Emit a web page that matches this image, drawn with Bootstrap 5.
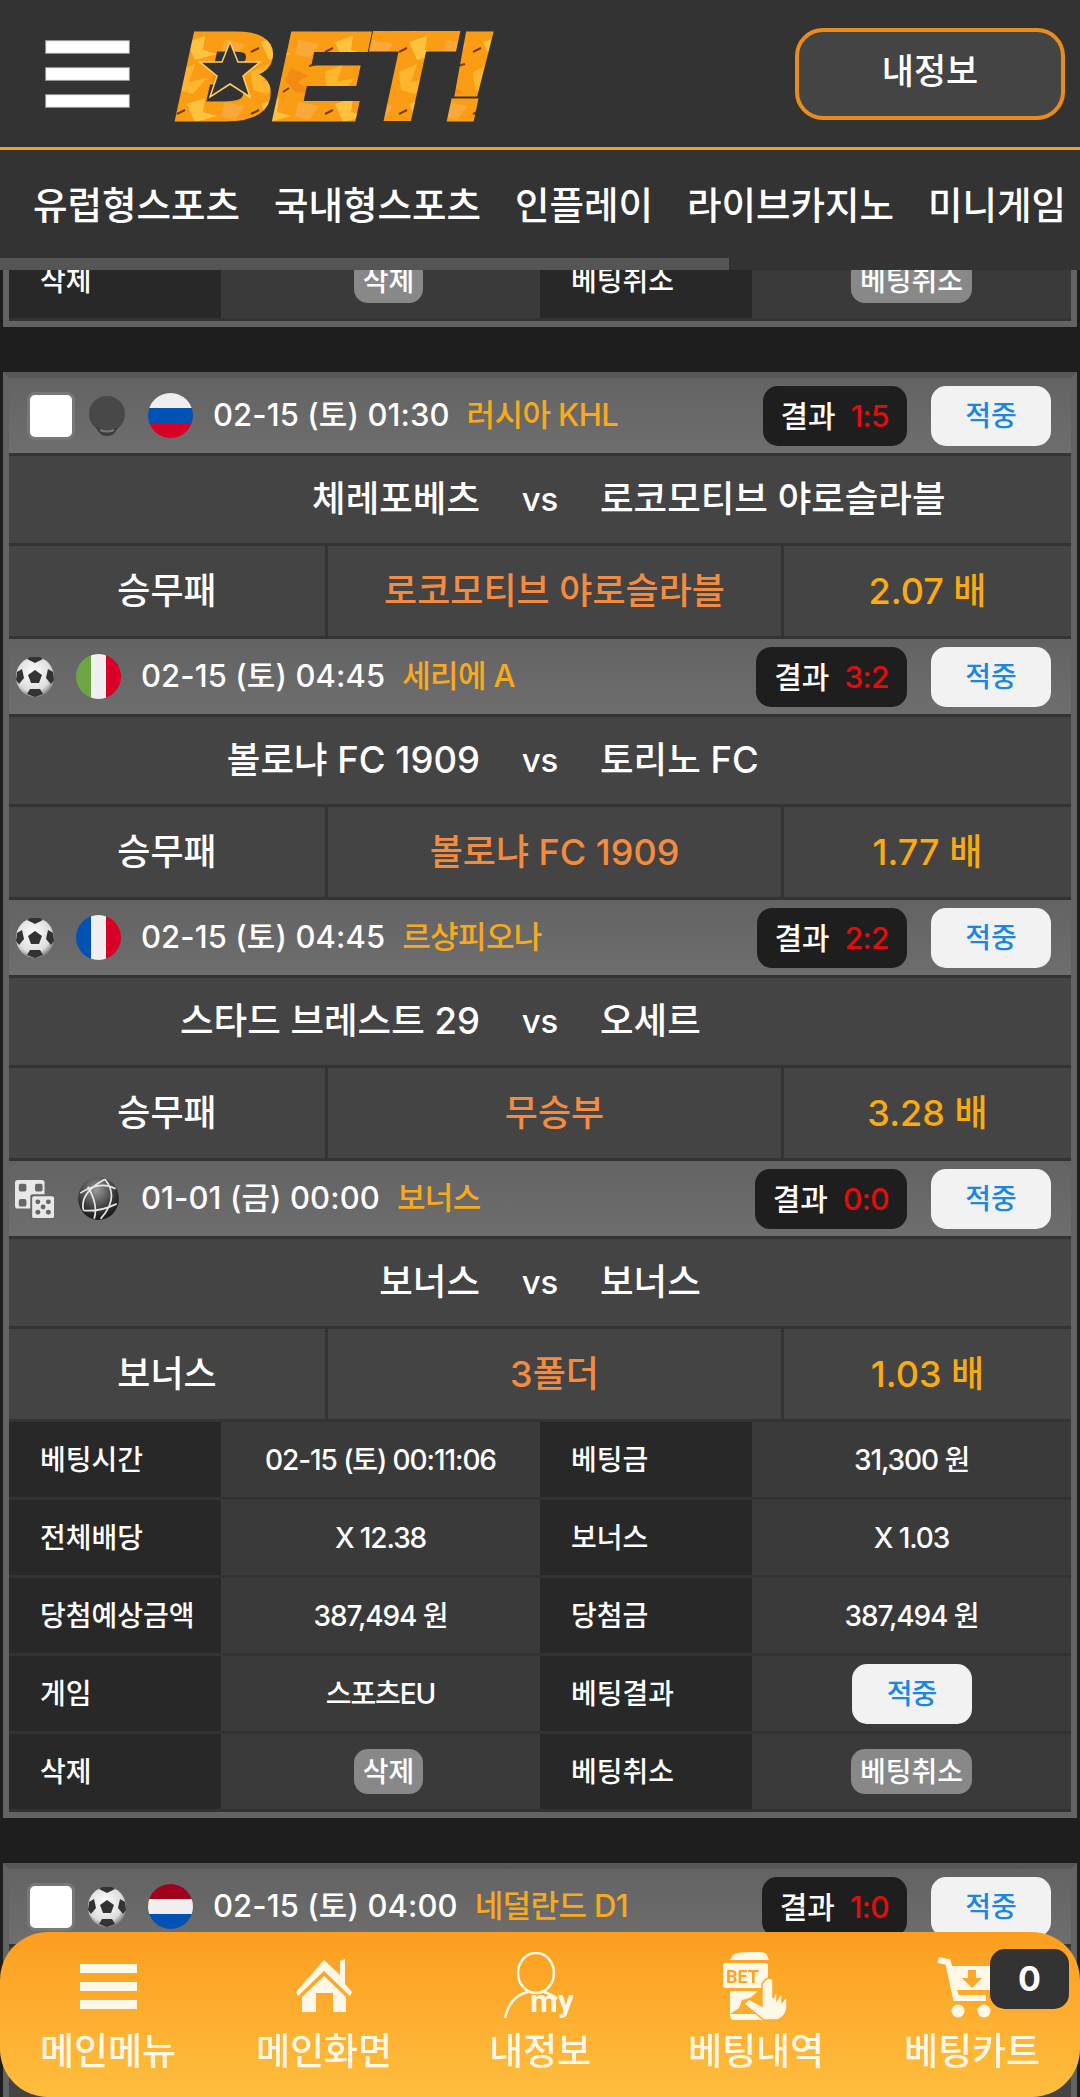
<!DOCTYPE html>
<html lang="ko">
<head>
<meta charset="utf-8">
<title>BET!</title>
<link href="https://cdn.jsdelivr.net/npm/bootstrap@5.3.3/dist/css/bootstrap.min.css" rel="stylesheet">
<script src="https://cdn.jsdelivr.net/npm/bootstrap@5.3.3/dist/js/bootstrap.bundle.min.js"></script>
<style>
    html, body { height: 2097px; overflow: hidden; }
    body {
        background: #1e1e1e;
        color: #fff;
        font-family: Inter, "Noto Sans CJK KR", sans-serif;
        font-weight: 500;
    }
    .svg-defs { width: 0; height: 0; overflow: hidden; }

    .top-head { background: #333; }
    .head-bar { height: 147px; padding: 0 15px 0 45px; }
    .burger { width: 85px; gap: 13px; }
    .burger span { height: 14px; background: #fff; box-shadow: 0 0 1px 1px #888 inset; }
    .site-logo { width: 323px; height: 147px; margin-left: 43px; }
    .my-btn {
        width: 270px; height: 92px; padding: 0 0 4px; border: 4px solid #e98c1c; border-radius: 28px;
        background: #444; color: #fff; font-size: 35px; font-weight: 500; line-height: 1;
    }
    .my-btn:hover { background: #444; color: #fff; border-color: #e98c1c; }
    .game-nav { height: 111px; padding: 4px 0 0 33px; gap: 34px; border-top: 3px solid #eaa51f; }
    .game-nav .nav-link { padding: 0; color: #fff; font-size: 37.5px; line-height: 1; white-space: nowrap; }
    .nav-thumb { width: 729px; height: 12px; background: #555; }

    .page-body { padding-top: 243px; }
    .slip { margin: 0 3px 45px; border: 6px solid #636363; border-top-color: #585858; background: #333; padding-bottom: 3px; }
    .slip-cut { border-top: 0; }
    .game-head { height: 75px; padding: 0 20px 0 6px; background: linear-gradient(#636363, #6e6e6e); margin-bottom: 3px; }
    .game-head.has-check { padding-left: 18px; }
    .check-box { width: 48px; height: 48px; border: 3px solid #777; border-radius: 8px; background: #fff; margin-right: 12px; flex: none; }
    .sport-ico { width: 40px; height: 42px; flex: none; }
    .flag-dot { width: 45px; height: 45px; margin: 0 20px 0 21px; flex: none; }
    .flag-ru { background: linear-gradient(#eee 33%, #0052b4 33% 67%, #d80027 67%); }
    .flag-fr { background: linear-gradient(90deg, #0052b4 33%, #f0f0f0 33% 67%, #d80027 67%); }
    .flag-it { background: linear-gradient(90deg, #6da544 33%, #f0f0f0 33% 67%, #d80027 67%); }
    .flag-nl { background: linear-gradient(#a2001d 33%, #f0f0f0 33% 67%, #0052b4 67%); }
    .game-time { padding-bottom: 2px; font-size: 31px; line-height: 1; white-space: nowrap; letter-spacing: .1px; }
    .league { margin-left: 17px; padding-bottom: 2px; color: #f8aa1c; font-size: 31px; line-height: 1; white-space: nowrap; letter-spacing: -.6px; }
    .result-tag { height: 60px; padding: 0 18px; gap: 15px; border-radius: 15px; background: #1e1e1e; font-size: 30px; line-height: 1; }
    .result-tag b { color: #e60c0c; font-weight: 500; letter-spacing: -.6px; }
    .hit-btn {
        display: flex; align-items: center; justify-content: center;
        width: 120px; height: 60px; border-radius: 15px; background: #f2f2f2;
        color: #1a88e0; font-size: 28px; line-height: 1;
    }
    .team-line { height: 87px; background: #444; margin-bottom: 3px; font-size: 36.5px; line-height: 1; white-space: nowrap; }
    .team-line .vs-mid { width: 120px; text-align: center; font-size: 33px; }
    .team-name { flex: 1 1 0; }
    .bet-line { height: 90px; margin-bottom: 3px; gap: 3px; font-size: 36px; line-height: 1; }
    .bet-line > div { background: #444; display: flex; align-items: center; justify-content: center; }
    .bet-type { width: 316px; }
    .bet-pick { width: 453px; color: #f58b3e; }
    .bet-odds { width: 287px; color: #fbab0e; }
    .info-grid { display: grid; grid-template-columns: 212px 319px 212px 319px; grid-auto-rows: 75px; row-gap: 3px; font-size: 28px; line-height: 1; }
    .info-label { background: #282828; padding-left: 31px; display: flex; align-items: center; white-space: nowrap; }
    .info-val { background: #3a3a3a; display: flex; align-items: center; justify-content: center; white-space: nowrap; letter-spacing: -1.1px; }
    .grey-btn { height: 45px; padding: 0 9px; border-radius: 14px; background: #888; display: flex; align-items: center; letter-spacing: 0; }
    .grey-btn-off { margin-left: 16px; }

    .foot-bar { height: 165px; border-radius: 48px; background: linear-gradient(#fc9e20, #ffbe3e); }
    .foot-item { width: 216px; height: 165px; padding-top: 20px; color: #fff8e6; font-size: 37px; line-height: 1; }
    .foot-ico { height: 68px; width: 100px; margin-bottom: 13px; }
    .burger-sm { width: 57px; gap: 9px; }
    .burger-sm span { height: 9px; background: #fff8e6; }
    .cart-count {
        top: 17px; right: 11px; width: 79px; height: 60px; border-radius: 15px;
        background: #333; color: #fff; font-size: 34px; line-height: 1; font-weight: 700;
    }
</style>
</head>
<body>

<svg class="svg-defs position-absolute" aria-hidden="true">
    <defs>
        <radialGradient id="ballFill" cx=".45" cy=".4" r=".65">
            <stop offset="0" stop-color="#fff"/><stop offset=".7" stop-color="#ddd"/><stop offset="1" stop-color="#666"/>
        </radialGradient>
        <radialGradient id="globeFill" cx=".45" cy=".3" r=".75">
            <stop offset="0" stop-color="#9a9a9a"/><stop offset=".65" stop-color="#333"/><stop offset="1" stop-color="#111"/>
        </radialGradient>
    </defs>
    <symbol id="ico-soccer" viewBox="0 0 40 42">
        <ellipse cx="20" cy="21" rx="19" ry="20" fill="url(#ballFill)"/>
        <polygon points="20,14 27,19 24,27 16,27 13,19" fill="#333"/>
        <path d="M12 3 L20 7 L28 3 L25 1 H15Z M2 16 L7 13 L9 22 L4 28 L1 24Z M38 16 L33 13 L31 22 L36 28 L39 24Z M12 38 L15 33 H25 L28 38 L20 41Z" fill="#333"/>
    </symbol>
    <symbol id="ico-hockey" viewBox="0 0 40 42">
        <ellipse cx="20" cy="19" rx="18" ry="18" fill="#484848"/>
        <path d="M9 32 Q20 38 31 32 Q28 41 20 41 Q12 41 9 32Z" fill="#3c3c3c"/>
        <path d="M13 35 Q20 38 27 35" stroke="#777" stroke-width="2" fill="none"/>
    </symbol>
    <symbol id="ico-globe" viewBox="0 0 40 42">
        <ellipse cx="20" cy="21" rx="19" ry="20" fill="url(#globeFill)"/>
        <path d="M3 16 Q22 4 36 12 M6 32 Q2 16 26 3 M26 3 Q40 20 22 40 M6 32 Q20 34 37 26 M10 10 Q20 26 16 40" stroke="#e6e6e6" stroke-width="1.6" fill="none"/>
    </symbol>
    <symbol id="ico-dice" viewBox="0 0 42 42">
        <rect x="0" y="1" width="31" height="30" rx="3" fill="#e8e8e8"/>
        <rect x="4" y="5" width="8" height="8" rx="2" fill="#666"/>
        <rect x="21" y="5" width="8" height="8" rx="2" fill="#666"/>
        <rect x="4" y="21" width="8" height="8" rx="2" fill="#666"/>
        <rect x="16" y="16" width="26" height="26" rx="3" fill="#666"/>
        <rect x="18" y="18" width="23" height="23" rx="2" fill="#e8e8e8"/>
        <g fill="#666"><circle cx="24" cy="24" r="2.6"/><circle cx="35" cy="24" r="2.6"/><circle cx="29.5" cy="29.5" r="2.6"/><circle cx="24" cy="35" r="2.6"/><circle cx="35" cy="35" r="2.6"/></g>
    </symbol>
</svg>

<header class="top-head fixed-top">
    <div class="head-bar d-flex align-items-center">
        <div class="burger d-flex flex-column"><span></span><span></span><span></span></div>
        <svg class="site-logo" viewBox="0 0 323 147" role="img" aria-label="BET!">
            <defs>
                <pattern id="leafFill" width="74" height="62" patternUnits="userSpaceOnUse">
                    <rect width="74" height="62" fill="#fb9d14"/>
                    <path d="M4 10 L22 2 L16 20 L34 16 L20 32 L6 28Z" fill="#ffb52e"/>
                    <path d="M44 6 L62 14 L50 20 L70 32 L48 30 L38 18Z" fill="#f58a12"/>
                    <path d="M14 42 L32 36 L30 50 L44 54 L22 60Z" fill="#ffc23f"/>
                    <path d="M52 40 L72 44 L62 58 L48 54Z" fill="#f9a93a"/>
                    <path d="M36 30 L42 26 M62 4 L70 2 M4 52 L12 48" stroke="#7a3d00" stroke-width="2"/>
                </pattern>
            </defs>
            <text x="4" y="118" font-family="Liberation Sans" font-weight="700" font-style="italic" font-size="120" textLength="314" lengthAdjust="spacingAndGlyphs" fill="url(#leafFill)" stroke="url(#leafFill)" stroke-width="7">BET!</text>
            <polygon points="57,42 65,62 87,62 70,76 77,97 57,84 37,97 44,76 27,62 49,62" fill="#333" stroke="#ffd05e" stroke-width="1.5"/>
        </svg>
        <button type="button" class="btn my-btn ms-auto">내정보</button>
    </div>
    <nav class="nav game-nav flex-nowrap align-items-center overflow-hidden">
        <a class="nav-link" href="#">유럽형스포츠</a>
        <a class="nav-link" href="#">국내형스포츠</a>
        <a class="nav-link" href="#">인플레이</a>
        <a class="nav-link" href="#">라이브카지노</a>
        <a class="nav-link" href="#">미니게임</a>
    </nav>
    <div class="nav-thumb"></div>
</header>

<main class="page-body">

    <section class="slip slip-cut">
        <div class="info-grid">
            <div class="info-label">삭제</div>
            <div class="info-val"><span class="grey-btn grey-btn-off">삭제</span></div>
            <div class="info-label">베팅취소</div>
            <div class="info-val"><span class="grey-btn">베팅취소</span></div>
        </div>
    </section>

    <section class="slip">
        <div class="game-head has-check d-flex align-items-center">
            <span class="check-box"></span>
            <svg class="sport-ico"><use href="#ico-hockey"/></svg>
            <span class="flag-dot flag-ru rounded-circle"></span>
            <span class="game-time">02-15 (토) 01:30</span>
            <span class="league">러시아 KHL</span>
            <span class="result-tag d-flex align-items-center ms-auto">결과 <b>1:5</b></span>
            <span class="hit-btn ms-4">적중</span>
        </div>
        <div class="team-line d-flex align-items-center">
            <span class="team-name text-end">체레포베츠</span><span class="vs-mid">vs</span><span class="team-name">로코모티브 야로슬라블</span>
        </div>
        <div class="bet-line d-flex">
            <div class="bet-type">승무패</div><div class="bet-pick">로코모티브 야로슬라블</div><div class="bet-odds">2.07 배</div>
        </div>

        <div class="game-head d-flex align-items-center">
            <svg class="sport-ico"><use href="#ico-soccer"/></svg>
            <span class="flag-dot flag-it rounded-circle"></span>
            <span class="game-time">02-15 (토) 04:45</span>
            <span class="league">세리에 A</span>
            <span class="result-tag d-flex align-items-center ms-auto">결과 <b>3:2</b></span>
            <span class="hit-btn ms-4">적중</span>
        </div>
        <div class="team-line d-flex align-items-center">
            <span class="team-name text-end">볼로냐 FC 1909</span><span class="vs-mid">vs</span><span class="team-name">토리노 FC</span>
        </div>
        <div class="bet-line d-flex">
            <div class="bet-type">승무패</div><div class="bet-pick">볼로냐 FC 1909</div><div class="bet-odds">1.77 배</div>
        </div>

        <div class="game-head d-flex align-items-center">
            <svg class="sport-ico"><use href="#ico-soccer"/></svg>
            <span class="flag-dot flag-fr rounded-circle"></span>
            <span class="game-time">02-15 (토) 04:45</span>
            <span class="league">르샹피오나</span>
            <span class="result-tag d-flex align-items-center ms-auto">결과 <b>2:2</b></span>
            <span class="hit-btn ms-4">적중</span>
        </div>
        <div class="team-line d-flex align-items-center">
            <span class="team-name text-end">스타드 브레스트 29</span><span class="vs-mid">vs</span><span class="team-name">오세르</span>
        </div>
        <div class="bet-line d-flex">
            <div class="bet-type">승무패</div><div class="bet-pick">무승부</div><div class="bet-odds">3.28 배</div>
        </div>

        <div class="game-head d-flex align-items-center">
            <svg class="sport-ico"><use href="#ico-dice"/></svg>
            <svg class="sport-ico flag-dot"><use href="#ico-globe"/></svg>
            <span class="game-time">01-01 (금) 00:00</span>
            <span class="league">보너스</span>
            <span class="result-tag d-flex align-items-center ms-auto">결과 <b>0:0</b></span>
            <span class="hit-btn ms-4">적중</span>
        </div>
        <div class="team-line d-flex align-items-center">
            <span class="team-name text-end">보너스</span><span class="vs-mid">vs</span><span class="team-name">보너스</span>
        </div>
        <div class="bet-line d-flex">
            <div class="bet-type">보너스</div><div class="bet-pick">3폴더</div><div class="bet-odds">1.03 배</div>
        </div>

        <div class="info-grid">
            <div class="info-label">베팅시간</div><div class="info-val">02-15 (토) 00:11:06</div>
            <div class="info-label">베팅금</div><div class="info-val">31,300 원</div>
            <div class="info-label">전체배당</div><div class="info-val">X 12.38</div>
            <div class="info-label">보너스</div><div class="info-val">X 1.03</div>
            <div class="info-label">당첨예상금액</div><div class="info-val">387,494 원</div>
            <div class="info-label">당첨금</div><div class="info-val">387,494 원</div>
            <div class="info-label">게임</div><div class="info-val">스포츠EU</div>
            <div class="info-label">베팅결과</div><div class="info-val"><span class="hit-btn">적중</span></div>
            <div class="info-label">삭제</div><div class="info-val"><span class="grey-btn grey-btn-off">삭제</span></div>
            <div class="info-label">베팅취소</div><div class="info-val"><span class="grey-btn">베팅취소</span></div>
        </div>
    </section>

    <section class="slip">
        <div class="game-head has-check d-flex align-items-center">
            <span class="check-box"></span>
            <svg class="sport-ico"><use href="#ico-soccer"/></svg>
            <span class="flag-dot flag-nl rounded-circle"></span>
            <span class="game-time">02-15 (토) 04:00</span>
            <span class="league">네덜란드 D1</span>
            <span class="result-tag d-flex align-items-center ms-auto">결과 <b>1:0</b></span>
            <span class="hit-btn ms-4">적중</span>
        </div>
        <div class="team-line"></div>
        <div class="bet-line d-flex"><div class="bet-type"></div><div class="bet-pick"></div><div class="bet-odds"></div></div>
    </section>
</main>

<footer class="foot-bar fixed-bottom d-flex justify-content-between">
    <a class="foot-item d-flex flex-column align-items-center text-decoration-none">
        <div class="foot-ico d-flex justify-content-center align-items-center"><div class="burger-sm d-flex flex-column"><span></span><span></span><span></span></div></div>
        메인메뉴
    </a>
    <a class="foot-item d-flex flex-column align-items-center text-decoration-none">
        <svg class="foot-ico" viewBox="0 0 100 68">
            <path fill="#fff8e6" d="M50 8 L66 23 V9 L71 7 V32 L78 40 L76 44 L50 19 L24 44 L22 40Z M50 24 L72 45 V60 H59 V41 H42 V60 H28 V45Z"/>
        </svg>
        메인화면
    </a>
    <a class="foot-item d-flex flex-column align-items-center text-decoration-none">
        <svg class="foot-ico" viewBox="0 0 100 68">
            <ellipse cx="46" cy="21" rx="18" ry="20" fill="none" stroke="#fff8e6" stroke-width="2.5"/>
            <path d="M38 40 Q20 44 15 66 M54 40 Q62 42 67 47" fill="none" stroke="#fff8e6" stroke-width="2.5"/>
            <text x="40" y="60" font-family="Roboto" font-weight="700" font-size="32" fill="#fff8e6">my</text>
        </svg>
        내정보
    </a>
    <a class="foot-item d-flex flex-column align-items-center text-decoration-none">
        <svg class="foot-ico" viewBox="0 0 100 68">
            <path fill="#fff8e6" d="M24 8 L27 3 Q30 0 44 0 H54 Q59 0 61 3 L63 8Z"/>
            <rect x="17" y="11" width="45" height="25" rx="3" fill="#fff8e6"/>
            <text x="20" y="31" font-family="Roboto" font-weight="700" font-size="18" fill="#f9a526">BET</text>
            <path fill="#fff8e6" d="M24 39 H52 L44 46 L36 48 L33 56 L24 62Z M24 62 H58 V68 H28 Q24 68 24 62Z"/>
            <path fill="#fff8e6" stroke="#fca92b" stroke-width="1.5" d="M59 28 Q63 24 67 28 V46 L71 38 V48 L76 40 V50 L81 44 V56 Q80 64 72 68 H58 L38 52 L43 47 L56 54 V32Z"/>
        </svg>
        베팅내역
    </a>
    <a class="foot-item position-relative d-flex flex-column align-items-center text-decoration-none">
        <svg class="foot-ico" viewBox="0 0 100 68">
            <path fill="none" stroke="#fff8e6" stroke-width="6" d="M16 8 L26 10 L34 46 H64"/>
            <path fill="#fff8e6" d="M28 14 H78 L72 38 H34Z"/>
            <path fill="#fca92b" d="M46 18 H54 V26 H60 L50 36 L40 26 H46Z"/>
            <circle cx="36" cy="59" r="6.5" fill="#fff8e6"/><circle cx="62" cy="59" r="6.5" fill="#fff8e6"/>
        </svg>
        베팅카트
        <span class="cart-count position-absolute d-flex align-items-center justify-content-center">0</span>
    </a>
</footer>

</body>
</html>
